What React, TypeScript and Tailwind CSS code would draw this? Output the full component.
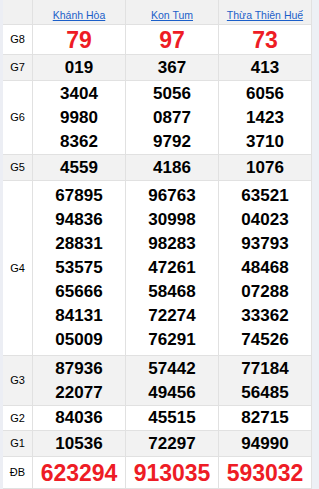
import React from "react";

interface Row {
  label: string;
  values: string[][];
  height: number;
  shaded?: boolean;
  big?: boolean;
}

const provinces = ["Khánh Hòa", "Kon Tum", "Thừa Thiên Huế"];

const rows: Row[] = [
  { label: "G8", values: [["79"], ["97"], ["73"]], height: 30, big: true },
  { label: "G7", values: [["019"], ["367"], ["413"]], height: 26, shaded: true },
  {
    label: "G6",
    values: [
      ["3404", "9980", "8362"],
      ["5056", "0877", "9792"],
      ["6056", "1423", "3710"],
    ],
    height: 74,
  },
  { label: "G5", values: [["4559"], ["4186"], ["1076"]], height: 26, shaded: true },
  {
    label: "G4",
    values: [
      ["67895", "94836", "28831", "53575", "65666", "84131", "05009"],
      ["96763", "30998", "98283", "47261", "58468", "72274", "76291"],
      ["63521", "04023", "93793", "48468", "07288", "33362", "74526"],
    ],
    height: 175,
  },
  {
    label: "G3",
    values: [
      ["87936", "22077"],
      ["57442", "49456"],
      ["77184", "56485"],
    ],
    height: 50,
    shaded: true,
  },
  { label: "G2", values: [["84036"], ["45515"], ["82715"]], height: 25 },
  { label: "G1", values: [["10536"], ["72297"], ["94990"]], height: 26, shaded: true },
  { label: "ĐB", values: [["623294"], ["913035"], ["593032"]], height: 32, big: true },
];

const cell = "border-r border-b border-[#e1e1e1] flex flex-col items-center justify-center";

export default function App() {
  return (
    <div
      className="flex w-[319px] h-[489px] overflow-hidden bg-white"
      style={{ fontFamily: '"Liberation Sans", Arial, sans-serif' }}
    >
      <div className="w-[3px] shrink-0 bg-[#eceef4]" />
      <div className="w-[309px] shrink-0 grid grid-cols-[30px_93px_93px_93px]">
        <div className={`${cell} h-[25px] bg-[#f1f1f1]`} />
        {provinces.map((p) => (
          <div key={p} className={`${cell} h-[25px] bg-[#f1f1f1] pt-[6px]`}>
            <a href="#" className="text-[10.5px] leading-[14px] text-[#1b5fc9] underline">
              {p}
            </a>
          </div>
        ))}
        {rows.map((r) => (
          <React.Fragment key={r.label}>
            <div
              className={`${cell} text-[11px] text-black ${r.shaded ? "bg-[#f2f2f2]" : "bg-white"}`}
              style={{ height: r.height }}
            >
              {r.label}
            </div>
            {r.values.map((col, i) => (
              <div
                key={i}
                className={`${cell} ${r.shaded ? "bg-[#f2f2f2]" : "bg-white"}`}
                style={{ height: r.height }}
              >
                {col.map((v) => (
                  <span
                    key={v}
                    className={
                      r.big
                        ? "text-[23px] leading-[26px] font-bold text-[#ee1c25]"
                        : "text-[17px] leading-[24px] font-bold text-black"
                    }
                  >
                    {v}
                  </span>
                ))}
              </div>
            ))}
          </React.Fragment>
        ))}
      </div>
      <div className="flex-1 bg-[#edf0f5]" />
    </div>
  );
}
